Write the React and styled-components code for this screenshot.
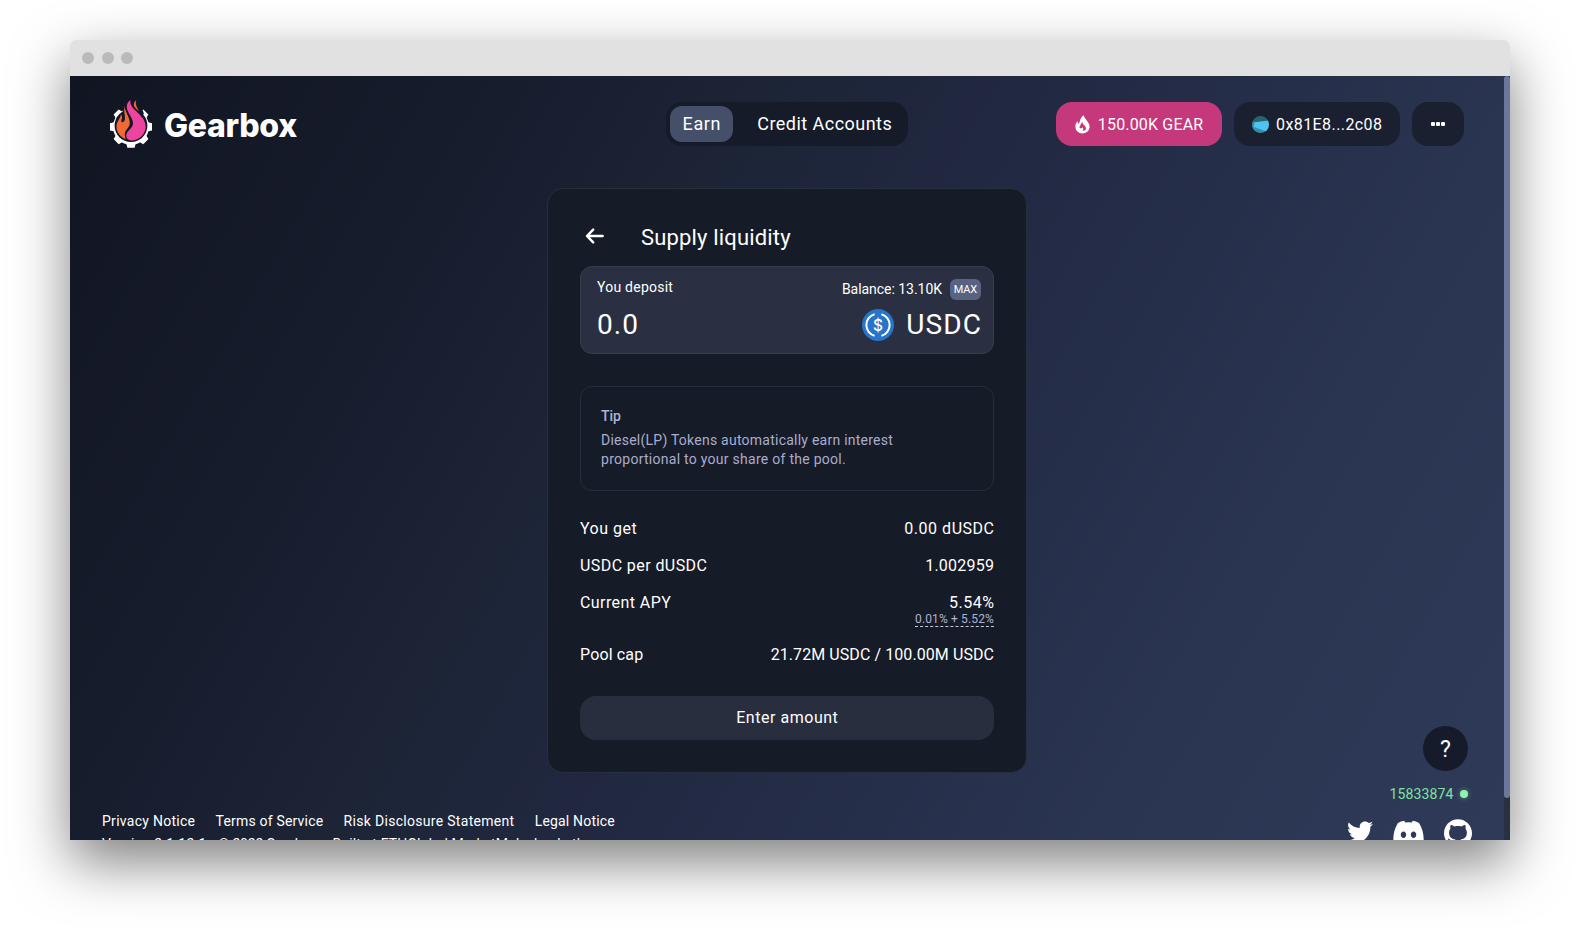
import React from 'react';
import styled, { createGlobalStyle } from 'styled-components';
import { FaTwitter, FaDiscord } from 'react-icons/fa';
import { SiGithub } from 'react-icons/si';

const GlobalStyle = createGlobalStyle`
  *, *::before, *::after { box-sizing: border-box; }
  html, body { margin: 0; padding: 0; background: #fff; overflow: hidden; }
  body { font-family: Roboto, "Liberation Sans", sans-serif; color: #fff; }
  button { font: inherit; color: inherit; border: 0; padding: 0; background: none; }
`;

const Desktop = styled.div`
  height: 940px;
  padding: 40px 70px 100px;
`;

const Window = styled.div`
  width: 1440px;
  height: 800px;
  display: flex;
  flex-direction: column;
  border-radius: 6px 6px 0 0;
  box-shadow: 0 22px 55px rgba(0, 0, 0, 0.5);
`;

const TitleBar = styled.div`
  height: 36px;
  display: flex;
  align-items: center;
  gap: 7.5px;
  padding-left: 12px;
  background: #e1e1e1;
  border-radius: 6px 6px 0 0;
`;

const WindowDot = styled.span`
  width: 12px;
  height: 12px;
  border-radius: 50%;
  background: #bababa;
`;

const Content = styled.div`
  height: 764px;
  display: flex;
  overflow: hidden;
`;

const Page = styled.div`
  position: relative;
  width: 1434px;
  height: 764px;
  display: flex;
  flex-direction: column;
  overflow: hidden;
  background: linear-gradient(120deg, #111522 0%, #151a29 15%, #181d2e 24%, #1c2436 37%, #222943 54%, #2a3551 78%, #2f3a59 100%);
`;

const ScrollTrack = styled.div`
  width: 6px;
  background: #2a3042;
`;

const ScrollThumb = styled.div`
  height: 722px;
  background: #6c779d;
  border-radius: 3px;
`;

const Text = styled.span`
  font-size: ${(p) => p.$size || 16}px;
  line-height: ${(p) => (p.$line ? `${p.$line}px` : 'normal')};
  font-weight: ${(p) => p.$weight || 400};
  letter-spacing: ${(p) => p.$track || 0}px;
  margin-right: ${(p) => -(p.$track || 0)}px;
  color: ${(p) => p.$color || '#fff'};
  white-space: nowrap;
`;

const Header = styled.header`
  display: grid;
  grid-template-columns: 1fr auto 1fr;
  grid-template-rows: 44px;
  align-items: center;
  height: 44px;
  margin: 26px 40px 0;
`;

const Brand = styled.div`
  display: flex;
  align-items: center;
  gap: 11px;
`;

const BrandName = styled.span`
  font: 800 32px/38px Inter, sans-serif;
  letter-spacing: -0.3px;
  padding-top: 4px;
`;

const Nav = styled.nav`
  display: flex;
  gap: 12px;
  padding: 4px;
  height: 44px;
  border-radius: 16px;
  background: #161b2a;
`;

const NavItem = styled.a`
  display: flex;
  align-items: center;
  justify-content: center;
  width: ${(p) => p.$width}px;
  height: 36px;
  padding-bottom: 1px;
  border-radius: 12px;
  background: ${(p) => (p.$active ? '#454f69' : 'transparent')};
`;

const Actions = styled.div`
  display: flex;
  justify-content: flex-end;
  gap: 12px;
`;

const Pill = styled.button`
  display: flex;
  align-items: center;
  justify-content: center;
  gap: ${(p) => p.$gap || 0}px;
  width: ${(p) => p.$width}px;
  height: 44px;
  border-radius: 16px;
  background: ${(p) => (p.$accent ? '#c5387b' : '#1b2031')};
`;

const MoreDots = styled.span`
  display: flex;
  gap: 1px;
  &::before, &::after, & > i { content: ''; width: 4px; height: 4px; border-radius: 1px; background: #fff; }
`;

const Card = styled.main`
  align-self: center;
  width: 480px;
  margin-top: 42px;
  padding: 32px;
  display: flex;
  flex-direction: column;
  background: #161b28;
  border: 1px solid #272e3d;
  border-radius: 16px;
`;

const CardHeader = styled.div`
  display: flex;
  align-items: center;
  gap: 36px;
  height: 30px;
  margin-bottom: 15px;
  padding-left: 5px;
`;

const CardTitle = styled.h1`
  margin: 0;
  padding-top: 3px;
  font-size: 22px;
  line-height: 30px;
  font-weight: 400;
  letter-spacing: 0.16px;
`;

const DepositBox = styled.div`
  display: flex;
  justify-content: space-between;
  height: 88px;
  padding: 12px 12px 12px 16px;
  background: #2a3042;
  border: 1px solid #353d50;
  border-radius: 12px;
`;

const DepositColumn = styled.div`
  display: flex;
  flex-direction: column;
  justify-content: space-between;
  align-items: ${(p) => (p.$end ? 'flex-end' : 'flex-start')};
`;

const Inline = styled.div`
  display: flex;
  align-items: center;
  gap: ${(p) => p.$gap}px;
`;

const MaxButton = styled.button`
  display: flex;
  align-items: center;
  justify-content: center;
  width: 31px;
  height: 21px;
  border-radius: 6px;
  background: #586282;
`;

const TipBox = styled.div`
  display: flex;
  flex-direction: column;
  height: 105px;
  margin: 32px 0 28px;
  padding: 20px;
  border: 1px solid #272d3e;
  border-radius: 12px;
`;

const TipTitle = styled.h2`
  margin: 0 0 6px;
  font-size: 14px;
  line-height: 18px;
  font-weight: 500;
  color: #aeb2d3;
`;

const Stats = styled.div`
  display: flex;
  flex-direction: column;
  gap: 18px;
`;

const StatRow = styled.div`
  display: flex;
  justify-content: space-between;
  align-items: flex-start;
`;

const StatValue = styled.div`
  display: flex;
  flex-direction: column;
  align-items: flex-end;
`;

const Breakdown = styled.span`
  height: 15px;
  font-size: 12px;
  line-height: 14px;
  letter-spacing: 0.14px;
  color: #aeb2d3;
  border-bottom: 1px dashed #c4c7de;
`;

const SubmitButton = styled.button`
  display: flex;
  align-items: center;
  justify-content: center;
  height: 44px;
  margin-top: 32px;
  border-radius: 16px;
  background: #282e3d;
`;

const Footer = styled.footer`
  display: flex;
  justify-content: space-between;
  align-items: flex-start;
  margin-top: 37px;
  padding: 0 32px;
`;

const FooterText = styled.div`
  display: flex;
  flex-direction: column;
`;

const Socials = styled.div`
  display: flex;
  align-items: flex-start;
  gap: 19px;
  padding-top: 9px;
`;

const DiscordIcon = styled(FaDiscord)`
  width: 33px;
  height: 29px;
`;

const HelpButton = styled.button`
  position: absolute;
  right: 36px;
  bottom: 69px;
  width: 45px;
  height: 45px;
  display: flex;
  align-items: center;
  justify-content: center;
  padding-top: 2px;
  border-radius: 50%;
  background: #161b2b;
`;

const BlockStatus = styled.div`
  position: absolute;
  right: 36px;
  bottom: 37px;
  height: 18px;
  display: flex;
  align-items: center;
  gap: 6.5px;
`;

const StatusDot = styled.span`
  width: 8px;
  height: 8px;
  border-radius: 50%;
  background: #8df5ae;
  box-shadow: 0 0 5px rgba(141, 245, 174, 0.45);
`;

const GearLogo = () => (
  <svg width="43" height="49" viewBox="0 0 43 49">
    <g fill="#fff">
      {[45, 90, 135, 180, 225, 270, 315].map((a) => (
        <path key={a} d="M16.2 10.5 L17.4 5.8 H24.6 L25.8 10.5Z" transform={`rotate(${a} 21 26.8)`} />
      ))}
      <circle cx="21" cy="26.8" r="18" />
    </g>
    <circle cx="21" cy="25.6" r="16.4" fill="#131726" />
    <path d="M12.5 13 L16 0 H29 L34 14 L21 22Z" fill="#131726" />
    <path d="M14.6 5.5 C14.3 11 19.5 16 19.8 22.5 C20 28 14.6 29.5 14.8 35 Q14.9 38 16 39.4 C10.5 37.5 6.3 32 6.5 26.5 C6.8 20.5 11.2 17.8 10.8 14.3 C14 18 9.8 20.5 11.8 22.2 C15.8 22.6 15.2 17 14.4 13 Q13.8 9 14.6 5.5Z" fill="#ef6a35" />
    <path d="M26.3 0 C24.8 4.5 27.4 7.5 28.8 11.2 C26.5 9 23.6 7 23.8 4.2 Q24.2 1.5 26.3 0Z" fill="#ef6a35" />
    <path d="M20.5 0 C18.4 9.5 35.7 14.5 35.7 26.4 C35.7 34 29.5 40.2 21.4 40.4 C18 40.2 16.2 38.3 16.2 35.5 C16.4 30.8 23 28.5 23 23.5 C22.8 16.5 16.6 12.5 16.8 6.5 Q17 2 20.5 0Z" fill="#ee449f" />
  </svg>
);

const FlameIcon = () => (
  <svg width="15" height="19" viewBox="0 0 15 19">
    <path fill="#fff" d="M8.8 0.3 C8.5 3.2 14.6 6.8 14.6 11.6 C14.6 15.6 11.4 18.4 7.5 18.4 C3.5 18.4 0.4 15.5 0.4 11.7 C0.4 9.2 1.3 7.4 2.5 5.9 C2.5 7.3 2.8 8.2 3.7 8.8 C5.6 6.4 4.6 2.9 8.8 0.3Z" />
    <path fill="#c5387b" d="M7.6 7 C7 9.7 11 10.4 11 13.2 C11 15.2 9.2 16.1 7.2 15.6 C8.4 14.7 8.6 13.3 7.6 12.2 C6.8 14 4.6 13.6 4.3 11.8 C5.8 11 5.3 8.4 7.6 7Z" />
  </svg>
);

const Avatar = () => (
  <svg width="17" height="17" viewBox="0 0 17 17">
    <clipPath id="avatar"><circle cx="8.5" cy="8.5" r="8.5" /></clipPath>
    <g clipPath="url(#avatar)">
      <path fill="#27656a" d="M0 0H17V17H0Z" />
      <path fill="#3a8f80" d="M0 5.5L4 6L3 12L17 15V17H0Z" />
      <path fill="#2e8fe4" d="M2 10L10 12.5L13 15.5L2 13Z" />
      <path fill="#4fc1f3" d="M2.6 6.2L17 4.6V15H13L1.5 10.8Z" />
    </g>
  </svg>
);

const BackArrow = () => (
  <svg width="20" height="18" viewBox="0 0 20 18" fill="none" stroke="#fff" strokeWidth="2.5" strokeLinecap="round" strokeLinejoin="round">
    <path d="M17.6 9H2.4M8.2 2.6L2 9L8.2 15.4" />
  </svg>
);

const UsdcIcon = () => (
  <svg width="32" height="32" viewBox="0 0 32 32">
    <circle cx="16" cy="16" r="16" fill="#2775ca" />
    <g fill="none" stroke="#fff" strokeWidth="2">
      <path d="M12.6 5.2 A11.2 11.2 0 0 0 12.6 26.8" />
      <path d="M19.4 5.2 A11.2 11.2 0 0 1 19.4 26.8" />
    </g>
    <text x="16" y="21.6" textAnchor="middle" fill="#fff" fontFamily="Inter, sans-serif" fontSize="15.5" fontWeight="500">$</text>
  </svg>
);

const links = [
  ['Privacy Notice', 0.28],
  ['Terms of Service', 0.19],
  ['Risk Disclosure Statement', 0.3],
  ['Legal Notice', 0.18],
];

export default function App() {
  return (
    <>
      <GlobalStyle />
      <Desktop>
        <Window>
          <TitleBar>
            <WindowDot />
            <WindowDot />
            <WindowDot />
          </TitleBar>
          <Content>
            <Page>
              <Header>
                <Brand>
                  <GearLogo />
                  <BrandName>Gearbox</BrandName>
                </Brand>
                <Nav>
                  <NavItem $active $width={63}><Text $size={18} $line={21} $track={0.6}>Earn</Text></NavItem>
                  <NavItem $width={159}><Text $size={18} $line={21} $track={0.46}>Credit Accounts</Text></NavItem>
                </Nav>
                <Actions>
                  <Pill $accent $width={166} $gap={8}>
                    <FlameIcon />
                    <Text $track={0.17}>150.00K GEAR</Text>
                  </Pill>
                  <Pill $width={166} $gap={7}>
                    <Avatar />
                    <Text $track={0.42}>0x81E8...2c08</Text>
                  </Pill>
                  <Pill $width={52} aria-label="More"><MoreDots><i /></MoreDots></Pill>
                </Actions>
              </Header>

              <Card>
                <CardHeader>
                  <BackArrow />
                  <CardTitle>Supply liquidity</CardTitle>
                </CardHeader>

                <DepositBox>
                  <DepositColumn>
                    <Text $size={14} $line={17} $track={0.24}>You deposit</Text>
                    <Text $size={28} $line={32} $track={1.1}>0.0</Text>
                  </DepositColumn>
                  <DepositColumn $end>
                    <Inline $gap={8}>
                      <Text $size={14} $line={17} $track={-0.04}>Balance: 13.10K</Text>
                      <MaxButton><Text $size={11} $line={13} $track={-0.2}>MAX</Text></MaxButton>
                    </Inline>
                    <Inline $gap={12}>
                      <UsdcIcon />
                      <Text $size={28} $line={32} $track={1.1}>USDC</Text>
                    </Inline>
                  </DepositColumn>
                </DepositBox>

                <TipBox>
                  <TipTitle>Tip</TipTitle>
                  <Text $size={14} $line={19} $track={0.24} $color="#a9adcd">Diesel(LP) Tokens automatically earn interest</Text>
                  <Text $size={14} $line={19} $track={0.27} $color="#a9adcd">proportional to your share of the pool.</Text>
                </TipBox>

                <Stats>
                  <StatRow>
                    <Text $line={19} $track={0.5}>You get</Text>
                    <Text $line={19} $track={0.52}>0.00 dUSDC</Text>
                  </StatRow>
                  <StatRow>
                    <Text $line={19} $track={0.42}>USDC per dUSDC</Text>
                    <Text $line={19} $track={0.23}>1.002959</Text>
                  </StatRow>
                  <StatRow>
                    <Text $line={19} $track={0.42}>Current APY</Text>
                    <StatValue>
                      <Text $line={19} $track={0.5}>5.54%</Text>
                      <Breakdown>0.01% + 5.52%</Breakdown>
                    </StatValue>
                  </StatRow>
                  <StatRow>
                    <Text $line={19} $track={0.14}>Pool cap</Text>
                    <Text $line={19} $track={0.08}>21.72M USDC / 100.00M USDC</Text>
                  </StatRow>
                </Stats>

                <SubmitButton><Text $line={20} $track={0.54}>Enter amount</Text></SubmitButton>
              </Card>

              <Footer>
                <FooterText>
                  <Inline $gap={20.5}>
                    {links.map(([label, track]) => (
                      <Text key={label} $size={14} $line={23} $track={track}>{label}</Text>
                    ))}
                  </Inline>
                  <Inline $gap={12}>
                    <Text $size={14} $line={23} $track={0.22}>Version 2.1.12.1</Text>
                    <Text $size={14} $line={23} $track={-0.2}>© 2022 Gearbox.</Text>
                    <Text $size={14} $line={23} $track={0.12}>Built at ETHGlobal MarketMake hackathon</Text>
                  </Inline>
                </FooterText>
                <Socials>
                  <FaTwitter size={26} />
                  <DiscordIcon preserveAspectRatio="none" />
                  <SiGithub size={28} />
                </Socials>
              </Footer>

              <HelpButton><Text $size={23}>?</Text></HelpButton>
              <BlockStatus>
                <Text $size={14} $track={0.16} $color="#7fe3a0">15833874</Text>
                <StatusDot />
              </BlockStatus>
            </Page>
            <ScrollTrack><ScrollThumb /></ScrollTrack>
          </Content>
        </Window>
      </Desktop>
    </>
  );
}
